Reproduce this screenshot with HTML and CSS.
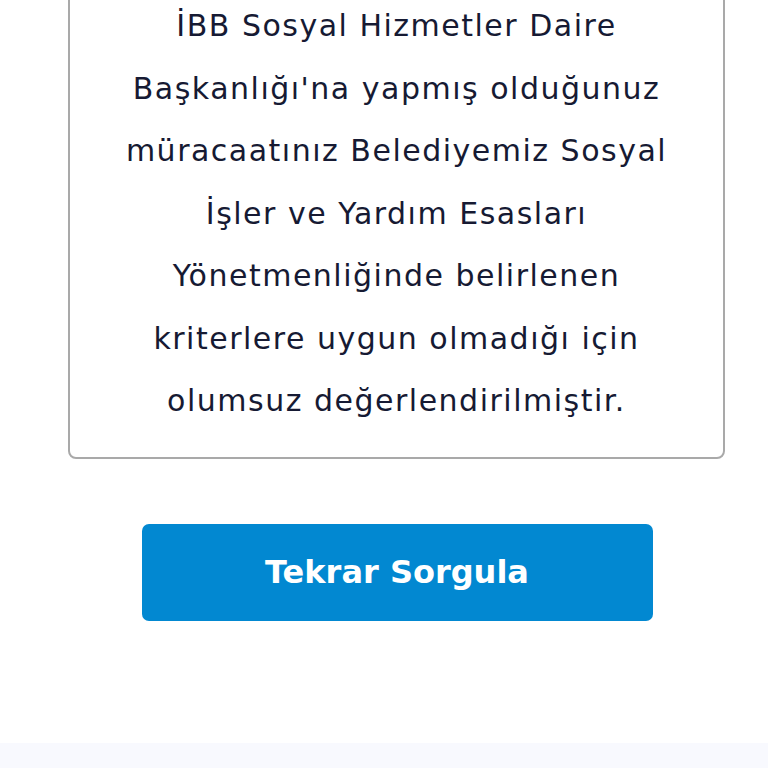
FILE: index.html
```html
<!DOCTYPE html>
<html lang="tr">
<head>
  <meta charset="UTF-8">
  <meta name="viewport" content="width=device-width, initial-scale=1.0">
  <title>Başvuru Sonucu</title>
  <link rel="stylesheet" href="styles.css">
</head>
<body>
  <main class="page">
    <section class="result-card">
      <p class="result-text">İBB Sosyal Hizmetler Daire Başkanlığı'na yapmış olduğunuz müracaatınız Belediyemiz Sosyal İşler ve Yardım Esasları Yönetmenliğinde belirlenen kriterlere uygun olmadığı için olumsuz değerlendirilmiştir.</p>
    </section>

    <button type="button" class="retry-btn">Tekrar Sorgula</button>
  </main>

  <footer class="bottom-bar"></footer>
</body>
</html>
```

FILE: styles.css
```css
:root {
  --text-color: #161a33;
  --border-color: #a9a9a9;
  --primary: #0288d1;
  --radius: 8px;
}
* { box-sizing: border-box; }
html, body {
  height: 100%;
}
body {
  margin: 0;
  background: #ffffff;
  font-family: 'DejaVu Sans', 'Noto Sans', sans-serif;
  color: var(--text-color);
  display: flex;
  flex-direction: column;
  overflow: hidden;
}
.page {
  flex: 1;
  display: flex;
  flex-direction: column;
  align-items: center;
}
.result-card {
  width: 657px;
  margin: -60px 0 0 25px;
  padding: 53px 50px 24px;
  border: 2px solid var(--border-color);
  border-radius: var(--radius);
}
.result-text {
  margin: 0;
  font-size: 30px;
  letter-spacing: 1.5px;
  line-height: 62.5px;
  text-align: center;
}
.retry-btn {
  width: 511px;
  height: 97px;
  margin-top: 65px;
  margin-left: 26px;
  border: none;
  border-radius: 7px;
  background: var(--primary);
  color: #fff;
  font-family: inherit;
  font-size: 32px;
  font-weight: 700;
  cursor: pointer;
}
.bottom-bar {
  height: 25px;
  background: #f8f9fe;
  flex-shrink: 0;
}
```
